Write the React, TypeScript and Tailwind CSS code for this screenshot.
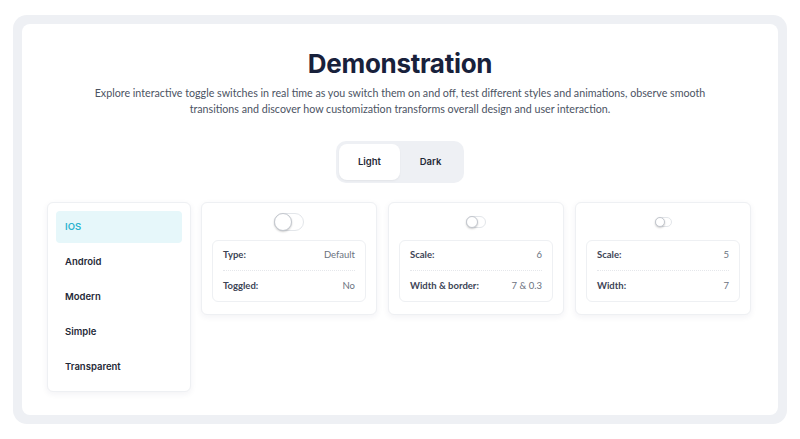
import { useState } from "react";

const variants = ["IOS", "Android", "Modern", "Simple", "Transparent"];

function Toggle({ w, h }: { w: number; h: number }) {
  return (
    <div
      className="relative rounded-full border border-[#e3e6ea] bg-white"
      style={{ width: w, height: h }}
    >
      <div
        className="absolute left-[-1px] top-[-1px] rounded-full border border-[#c3c7ce] bg-white shadow-[0_1px_2px_rgba(0,0,0,0.2)]"
        style={{ width: h, height: h }}
      />
    </div>
  );
}

function InfoCard({
  toggle,
  rows,
}: {
  toggle: { w: number; h: number };
  rows: [string, string][];
}) {
  return (
    <div className="w-[176px] rounded-md border border-[#eef0f3] bg-white px-[10px] pb-[12px] shadow-[0_2px_6px_rgba(30,40,80,0.06)]">
      <div className="flex h-[37px] items-center justify-center">
        <Toggle w={toggle.w} h={toggle.h} />
      </div>
      <div className="rounded-md border border-[#eef0f3] px-[10px]">
        {rows.map(([k, v], i) => (
          <div
            key={k}
            className={`flex h-[30px] items-center justify-between text-[9.5px] ${
              i === 0 ? "border-b border-dotted border-[#e5e7eb]" : ""
            }`}
          >
            <span className="font-bold text-[#3c4456]">{k}</span>
            <span className="text-[#6b7280]">{v}</span>
          </div>
        ))}
      </div>
    </div>
  );
}

export default function App() {
  const [mode, setMode] = useState("Light");
  const [active, setActive] = useState("IOS");
  return (
    <div className="h-[439px] w-[800px] bg-white px-[13px] pt-[15px] [font-family:Lato,sans-serif]">
      <div className="h-[409px] rounded-[14px] bg-[#eef0f4] p-[9px]">
        <div className="h-full rounded-[8px] bg-white px-[25px] pt-[24px]">
          <h1 className="text-center text-[26px] font-bold leading-[32px] tracking-[-0.3px] text-[#18213b] [font-family:Inter,sans-serif]">
            Demonstration
          </h1>
          <p className="mx-auto mt-[5px] w-[630px] text-center text-[10.7px] leading-[16px] text-[#4b5363]">
            Explore interactive toggle switches in real time as you switch them on and off, test different styles
            and animations, observe smooth transitions and discover how customization transforms overall design and
            user interaction.
          </p>
          <div className="mt-[24px] flex justify-center">
            <div className="flex rounded-[10px] bg-[#eef0f4] p-[3px]">
              {["Light", "Dark"].map((m) => (
                <button
                  key={m}
                  onClick={() => setMode(m)}
                  className={`h-[36px] w-[61px] rounded-[8px] text-[9.5px] font-semibold text-[#1f2937] [font-family:Inter,sans-serif] ${
                    mode === m ? "bg-white shadow-[0_1px_2px_rgba(0,0,0,0.05)]" : ""
                  }`}
                >
                  {m}
                </button>
              ))}
            </div>
          </div>
          <div className="mt-[19px] flex items-start gap-[10px]">
            <div className="flex w-[144px] flex-col gap-[3px] rounded-md border border-[#eef0f3] bg-white p-[8px] shadow-[0_2px_6px_rgba(30,40,80,0.06)]">
              {variants.map((v) => (
                <button
                  key={v}
                  onClick={() => setActive(v)}
                  className={`flex h-[32px] w-full items-center rounded-[4px] px-[9px] text-[9.5px] font-semibold [font-family:Inter,sans-serif] ${
                    active === v ? "bg-[#e6f7fa] text-[#2bb3cf]" : "text-[#1f2937]"
                  }`}
                >
                  {v}
                </button>
              ))}
            </div>
            <div className="flex items-start gap-[11px]">
              <InfoCard
                toggle={{ w: 30, h: 18 }}
                rows={[
                  ["Type:", "Default"],
                  ["Toggled:", "No"],
                ]}
              />
              <InfoCard
                toggle={{ w: 20, h: 12 }}
                rows={[
                  ["Scale:", "6"],
                  ["Width & border:", "7 & 0.3"],
                ]}
              />
              <InfoCard
                toggle={{ w: 17, h: 10 }}
                rows={[
                  ["Scale:", "5"],
                  ["Width:", "7"],
                ]}
              />
            </div>
          </div>
        </div>
      </div>
    </div>
  );
}
